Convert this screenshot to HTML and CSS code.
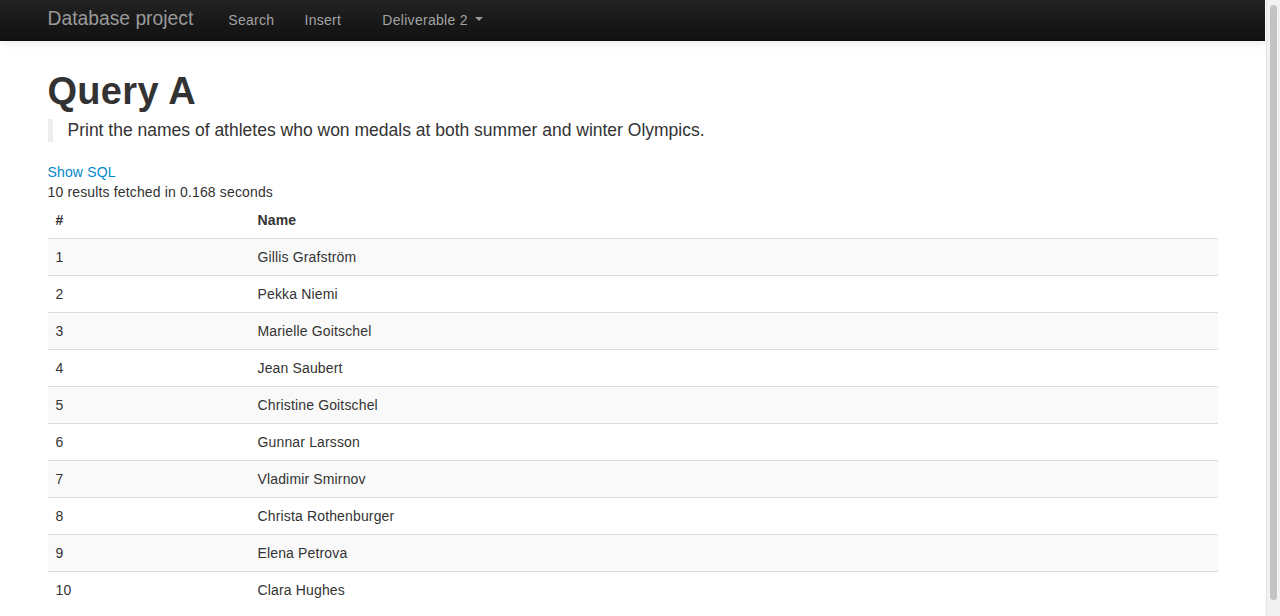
FILE: index.html
```html
<!DOCTYPE html>
<html lang="en">
<head>
<meta charset="utf-8">
<title>Query A - Database project</title>
<link rel="stylesheet" href="styles.css">
</head>
<body>
<div class="page">
  <header class="navbar">
    <div class="container nav-inner">
      <a class="brand" href="#">Database project</a>
      <ul class="nav">
        <li><a href="#">Search</a></li>
        <li><a href="#">Insert</a></li>
        <li class="dropdown"><a href="#">Deliverable 2 <span class="caret"></span></a></li>
      </ul>
    </div>
  </header>
  <main class="container main">
    <h1 class="title">Query A</h1>
    <blockquote class="lead"><p>Print the names of athletes who won medals at both summer and winter Olympics.</p></blockquote>
    <a class="sql-link" href="#">Show SQL</a>
    <div class="stats">10 results fetched in 0.168 seconds</div>
    <table class="results">
      <thead>
        <tr><th class="col-num">#</th><th>Name</th></tr>
      </thead>
      <tbody>
        <tr><td>1</td><td>Gillis Grafström</td></tr>
        <tr><td>2</td><td>Pekka Niemi</td></tr>
        <tr><td>3</td><td>Marielle Goitschel</td></tr>
        <tr><td>4</td><td>Jean Saubert</td></tr>
        <tr><td>5</td><td>Christine Goitschel</td></tr>
        <tr><td>6</td><td>Gunnar Larsson</td></tr>
        <tr><td>7</td><td>Vladimir Smirnov</td></tr>
        <tr><td>8</td><td>Christa Rothenburger</td></tr>
        <tr><td>9</td><td>Elena Petrova</td></tr>
        <tr><td>10</td><td>Clara Hughes</td></tr>
      </tbody>
    </table>
  </main>
</div>
<div class="scrollbar" aria-hidden="true"><div class="scroll-thumb"></div></div>
</body>
</html>
```
FILE: styles.css
```css
body {
  margin: 0;
  display: flex;
  align-items: flex-start;
  font-family: "Liberation Sans", Arial, Helvetica, sans-serif;
  font-size: 14px;
  line-height: 20px;
  letter-spacing: 0.15px;
  color: #333;
  background: #fff;
}

.page {
  flex: 1;
  min-width: 0;
}

.scrollbar {
  position: sticky;
  top: 0;
  width: 15px;
  height: 100vh;
  flex: none;
  box-sizing: border-box;
  background: #f1f1f1;
  border-left: 1px solid #fafafa;
  box-shadow: inset 1px 0 0 #e4e4e4;
  padding: 5px 3px 16px 4px;
  display: flex;
}

.scroll-thumb {
  flex: 1;
  background: #c3c3c3;
  border-radius: 4px;
}

.container {
  width: 1170px;
  margin: 0 auto;
}

.navbar {
  height: 40px;
  background: linear-gradient(to bottom, #222 0%, #111 100%);
  border-bottom: 1px solid #0c0c0c;
  box-shadow: 0 1px 10px rgba(0, 0, 0, 0.1);
  position: relative;
}

.nav-inner {
  display: flex;
  align-items: center;
  height: 40px;
}

.brand {
  display: block;
  margin-left: -20px;
  padding: 9px 20px 11px;
  font-size: 19.3px;
  line-height: 20px;
  letter-spacing: 0;
  color: #9a9a9a;
  text-decoration: none;
}

.nav {
  display: flex;
  list-style: none;
  margin: 0;
  padding: 0;
}

.nav a {
  display: block;
  padding: 10px 15px;
  color: #a3a3a3;
  text-decoration: none;
  font-size: 14px;
  line-height: 20px;
  letter-spacing: 0.3px;
}

.nav .dropdown {
  margin-left: 11px;
}

.caret {
  display: inline-block;
  width: 0;
  height: 0;
  margin-left: 3px;
  vertical-align: middle;
  border-top: 4px solid #999;
  border-left: 4px solid transparent;
  border-right: 4px solid transparent;
  position: relative;
  top: -2px;
}

.main {
  padding-top: 29px;
  padding-bottom: 10px;
}

.title {
  margin: 0;
  font-size: 38px;
  line-height: 42px;
  font-weight: bold;
  letter-spacing: 0.3px;
  color: #333;
}

.lead {
  margin: 7px 0 20px;
  padding: 0 0 0 15px;
  border-left: 5px solid #eee;
}

.lead p {
  margin: 0;
  font-size: 17.5px;
  line-height: 23px;
  font-weight: 300;
  letter-spacing: 0;
  color: #333;
}

.sql-link {
  display: block;
  color: #0088cc;
  text-decoration: none;
}

.stats {
  display: block;
}

.results {
  width: 100%;
  border-collapse: collapse;
  border-spacing: 0;
  margin-bottom: 20px;
}

.results th,
.results td {
  padding: 8px;
  line-height: 20px;
  text-align: left;
  vertical-align: top;
}

.results th {
  font-weight: bold;
  border-bottom: 1px solid #ddd;
}

.results .col-num {
  width: 186px;
}

.results td {
  border-top: 1px solid #ddd;
}

.results tbody tr:nth-child(odd) td {
  background: #f9f9f9;
}
```
